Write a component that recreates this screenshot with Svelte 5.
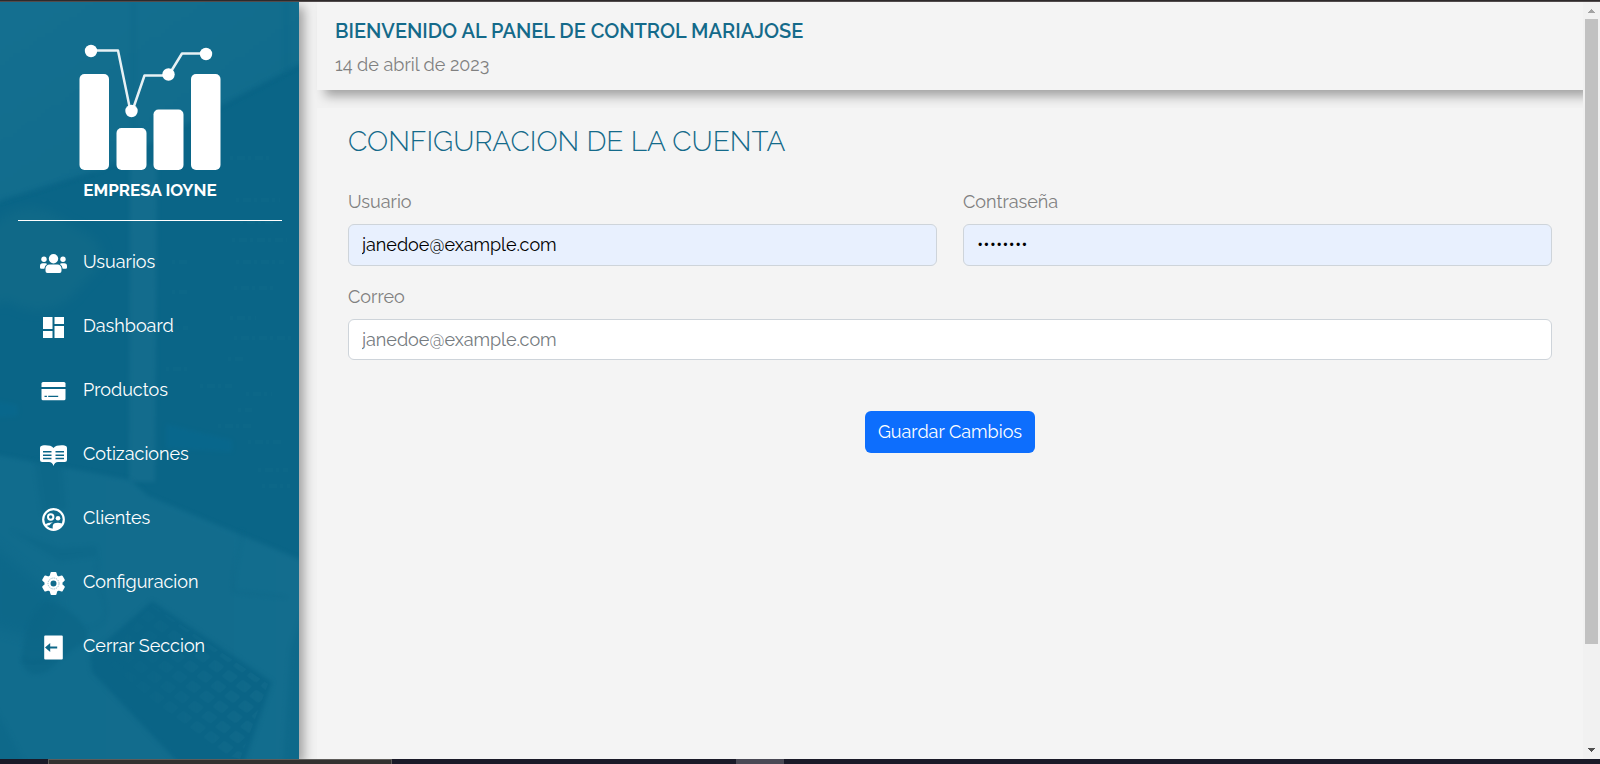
<script>
  const menu = [
    { label: 'Usuarios', icon: 'users' },
    { label: 'Dashboard', icon: 'dashboard' },
    { label: 'Productos', icon: 'card' },
    { label: 'Cotizaciones', icon: 'book' },
    { label: 'Clientes', icon: 'clients' },
    { label: 'Configuracion', icon: 'gear' },
    { label: 'Cerrar Seccion', icon: 'exit' }
  ];
  const codeLines = [
    [172, 262, 18], [232, 240, 55], [236, 262, 48], [172, 292, 16], [234, 288, 40],
    [230, 318, 26], [176, 328, 12], [234, 338, 60], [228, 359, 18], [166, 369, 22],
    [200, 386, 32], [246, 394, 26], [238, 410, 14], [218, 426, 36], [248, 442, 34],
    [258, 470, 30], [262, 486, 28], [230, 158, 40], [236, 200, 44], [240, 222, 36]
  ];
</script>

<div class="screen">
  <div class="edge-top"></div>
  <div class="view">
    <aside class="sidebar">
      <svg class="backdrop" viewBox="0 2 299 757" preserveAspectRatio="none" aria-hidden="true">
        <defs>
          <linearGradient id="wall" x1="0" y1="0" x2="1" y2="1">
            <stop offset="0" stop-color="#157091" />
            <stop offset="1" stop-color="#0f6a8a" />
          </linearGradient>
          <linearGradient id="desk" x1="0" y1="0" x2="1" y2="0">
            <stop offset="0" stop-color="#116c8d" />
            <stop offset="1" stop-color="#136d8e" />
          </linearGradient>
          <pattern id="keys" width="17" height="15" patternUnits="userSpaceOnUse" patternTransform="rotate(36) skewX(-12)">
            <rect x="2" y="2" width="12" height="10" rx="2" fill="#146d8d" />
          </pattern>
          <linearGradient id="keyFade" x1="0" y1="0" x2="1" y2="0">
            <stop offset="0.2" stop-color="#fff" stop-opacity="0.1" />
            <stop offset="0.9" stop-color="#fff" stop-opacity="0.8" />
          </linearGradient>
          <mask id="keyMask"><rect x="80" y="590" width="200" height="170" fill="url(#keyFade)" /></mask>
          <filter id="soft" x="-20%" y="-20%" width="140%" height="140%" color-interpolation-filters="sRGB"><feGaussianBlur stdDeviation="2" /></filter>
          <filter id="haze" x="-30%" y="-30%" width="160%" height="160%" color-interpolation-filters="sRGB"><feGaussianBlur stdDeviation="6" /></filter>
        </defs>
        <rect y="2" width="299" height="757" fill="#0a6587" />
        <path d="M-20 -20H320V54L190 122 100 170 -20 208Z" fill="url(#wall)" filter="url(#soft)" />
        <path d="M132 2h3v150h-3zM284 2h4v70h-4z" fill="#0c6789" opacity=".5" filter="url(#soft)" />
        <path d="M299 66 220 108M0 201 96 172" stroke="#096184" stroke-width="3" opacity=".4" filter="url(#soft)" />
        <path d="M-20 240C10 200 40 200 70 225 110 240 110 262 82 284 66 312 30 318 8 300L-20 310Z" fill="#186f8a" opacity=".45" filter="url(#haze)" />
        <path d="M130 165H157L155 482H129Z" fill="#1b7292" opacity=".55" filter="url(#soft)" />
        <path d="M166 424 232 440 232 452 166 448ZM-9 400 18 405V416L-9 418Z" fill="#076b94" opacity=".4" filter="url(#soft)" />
        {#each codeLines as [x, y, w]}
          <path d="M{x} {y}h{w}" stroke="#1a7693" stroke-width="4" stroke-dasharray="3 4 8 3" opacity=".16" />
        {/each}
        <path d="M-20 452 130 480 148 496 320 568V790H-20Z" fill="url(#desk)" filter="url(#soft)" />
        <path d="M34 460h28l4 48-24 6Z M10 530 60 548 96 546 98 556 60 561Z" fill="#0b6687" opacity=".5" filter="url(#soft)" />
        <path d="M-12 540 60 600 40 640 -12 625Z" fill="#0b6688" opacity=".6" filter="url(#haze)" />
        <path d="M242 530C240 550 232 575 234 592L286 597M98 560C92 590 112 600 104 620Q98 628 84 628" fill="none" stroke="#0b6586" stroke-width="2" opacity=".45" filter="url(#soft)" />
        <path d="M46 602C66 602 98 632 84 643 70 650 66 655 48 671 30 680 18 670 23 648 28 620 36 608 46 602Z" fill="#0b6586" opacity=".65" filter="url(#soft)" />
        <path d="M22 660Q38 668 62 652" fill="none" stroke="#075e80" stroke-width="3" opacity=".4" filter="url(#soft)" />
        <path d="M152 601 272 682 240 775H190L92 672 90 655Z" fill="#0a6486" filter="url(#soft)" />
        <path d="M152 605 268 684 240 759 215 752 104 660Z" fill="url(#keys)" mask="url(#keyMask)" opacity=".7" />
        <path d="M320 560V790L282 780 290 650Z" fill="#0b6687" opacity=".5" filter="url(#soft)" />
        <path d="M-20 680 34 780H-20Z" fill="#0c6788" opacity=".5" filter="url(#soft)" />
      </svg>

      <div class="brand">
        <svg class="logo" viewBox="79 44 141 127" aria-hidden="true">
          <g fill="#fff">
            <rect x="79" y="74" width="29.500" height="96" rx="5" />
            <rect x="116" y="128" width="30" height="42" rx="5" />
            <rect x="153" y="109.500" width="30" height="60.500" rx="5" />
            <rect x="190.500" y="74" width="29.500" height="96" rx="5" />
            <circle cx="90.500" cy="51" r="6.200" />
            <circle cx="131" cy="111" r="6.200" />
            <circle cx="168" cy="74.500" r="6.200" />
            <circle cx="205.500" cy="54" r="6.200" />
          </g>
          <path d="M90 50.500H117.500L129.500 109M132.500 109 144 75.500H168L181.500 53.500H205" fill="none" stroke="#fff" stroke-opacity=".9" stroke-width="2.500" stroke-linejoin="round" />
        </svg>
        <strong class="company">EMPRESA IOYNE</strong>
      </div>

      <nav>
        {#each menu as item}
          <a href="#{item.icon}">
            <svg viewBox="0 0 27 27" fill="#fff" aria-hidden="true">
              {#if item.icon === 'users'}
                <circle cx="13.500" cy="8.700" r="4.700" />
                <circle cx="4" cy="9.200" r="2.700" />
                <circle cx="23" cy="9.200" r="2.700" />
                <path d="M9.500 14.500h8c2.300 0 4 2 4 4.200v2.400q0 1.900-1.900 1.900H7.400q-1.900 0-1.900-1.900v-2.400c0-2.200 1.700-4.200 4-4.200ZM2.700 13.300h2.600q1 0 1.800.6-2.400 1.500-2.800 4.900H1.300Q0 18.800 0 17.500V16q0-2.700 2.700-2.700ZM21.700 13.300h2.600Q27 13.300 27 16v1.500q0 1.300-1.300 1.300h-3q-.4-3.400-2.800-4.900.8-.6 1.800-.6Z" />
              {:else if item.icon === 'dashboard'}
                <path d="M3 3h9.500v12H3zM14.500 3H24v7h-9.500zM14.500 12H24v12h-9.500zM3 17h9.500v7H3z" />
              {:else if item.icon === 'card'}
                <path d="M3 4h21q1.500 0 1.500 1.500V9h-24V5.500Q1.500 4 3 4Z" />
                <path fill-rule="evenodd" d="M1.500 11h24v9.700q0 1.500-1.500 1.500H3q-1.500 0-1.500-1.500ZM4.500 17.700v1.300h2.400v-1.300ZM8.200 17.700v1.300h10v-1.300Z" />
              {:else if item.icon === 'book'}
                <path fill-rule="evenodd" d="M2.500 3.500C7 3 11.800 3.600 13.500 6 15.200 3.600 20 3 24.500 3.500Q27 3.700 27 5.800V18q0 2-2.200 2H18q-3.400 0-4.500 4-1.100-4-4.500-4H2.200Q0 20 0 18V5.800Q0 3.700 2.500 3.500ZM3 9v1.500h8.500V9ZM3 12.400v1.500h8.500v-1.500ZM3 15.800v1.500h8.500v-1.500ZM15.500 9v1.500H24V9ZM15.500 12.400v1.500H24v-1.500ZM15.500 15.800v1.500H24v-1.500Z" />
              {:else if item.icon === 'clients'}
                <circle cx="13.500" cy="13.500" r="10.300" fill="none" stroke="#fff" stroke-width="2.200" />
                <circle cx="10.700" cy="11" r="2.700" fill="none" stroke="#fff" stroke-width="2" />
                <circle cx="18" cy="12.200" r="2.300" />
                <path d="M5 18.500q3.500-2.600 8-1.900-2.200.8-3.500 2.600-2 .1-3 1ZM12.700 23.500v-3.300q0-3.400 5.300-3.400 3.600 0 5 1.500-2 5.300-10.300 5.200Z" />
              {:else if item.icon === 'gear'}
                <path fill-rule="evenodd" stroke="#fff" stroke-width="2" stroke-linejoin="round" d="M11.500 3h4l.8 3.200 2.300 1.300 3.200-1 2 3.500-2.300 2.300v2.400l2.300 2.300-2 3.500-3.200-1-2.300 1.300-.8 3.200h-4l-.8-3.200-2.300-1.300-3.200 1-2-3.500 2.300-2.300v-2.400L3.200 10l2-3.500 3.200 1 2.300-1.300ZM13.500 9.500a4 4 0 1 0 0 8 4 4 0 1 0 0-8Z" />
                <circle cx="13.500" cy="13.500" r="5.500" fill="none" stroke="#0f6a8b" stroke-width=".4" stroke-dasharray="1.500 .8" />
              {:else}
                <path fill-rule="evenodd" d="M5.200 1.500h16.600q1 0 1 1v22q0 1-1 1H5.200q-1 0-1-1v-22q0-1 1-1ZM5 13.500l5.200 4.600v-3.500h7v-2.200h-7V8.900Z" />
              {/if}
            </svg>
            <span>{item.label}</span>
          </a>
        {/each}
      </nav>
    </aside>

    <main>
      <header>
        <h1>BIENVENIDO AL PANEL DE CONTROL MARIAJOSE</h1>
        <p>14 de abril de 2023</p>
      </header>

      <section>
        <h2>CONFIGURACION DE LA CUENTA</h2>
        <form onsubmit={(e) => e.preventDefault()}>
          <div class="field">
            <label for="usuario">Usuario</label>
            <input class="filled" id="usuario" type="text" value="janedoe@example.com" />
          </div>
          <div class="field">
            <label for="clave">Contraseña</label>
            <input class="filled" id="clave" type="password" value="contrase" />
          </div>
          <div class="field wide">
            <label for="correo">Correo</label>
            <input id="correo" type="email" placeholder="janedoe@example.com" />
          </div>
          <button type="submit">Guardar Cambios</button>
        </form>
      </section>
    </main>

    <div class="scrollbar" aria-hidden="true">
      <svg viewBox="0 0 17 17"><path d="M5 11h7v-1h-1V9h-1V8H9V7H8v1H7v1H6v1H5Z" fill="#a3a3a3" /></svg>
      <div class="track"><div class="thumb"></div></div>
      <svg viewBox="0 0 17 17"><path d="M5 6h7v1h-1v1h-1v1H9v1H8V9H7V8H6V7H5Z" fill="#505050" /></svg>
    </div>
  </div>
  <div class="taskbar"><span class="window"></span><span class="active"></span></div>
</div>

<style>
  :global(body) {
    margin: 0;
    background: #f1f1f1;
  }
  .screen,
  .screen * {
    box-sizing: border-box;
  }
  .screen {
    display: grid;
    grid-template-rows: 2px 1fr 5px;
    min-height: 100vh;
    font: 400 18px/27px Raleway, Lato, sans-serif;
    color: #808080;
  }
  .edge-top {
    background: #2e2a2b;
    border-bottom: 1px solid #514b4c;
  }
  .view {
    display: grid;
    grid-template-columns: 299px 1fr 17px;
    overflow: hidden;
  }
  .sidebar {
    position: relative;
    z-index: 1;
    padding: 42px 17px 0 18px;
    background: #0a6587;
    box-shadow: 5px 5px 10px rgba(0, 0, 0, 0.33);
    color: #fff;
  }
  .backdrop {
    position: absolute;
    inset: 0;
    width: 100%;
    height: 100%;
  }
  .brand {
    position: relative;
    display: flex;
    flex-direction: column;
    align-items: center;
    padding-bottom: 16px;
    border-bottom: 1px solid #fff;
  }
  .logo {
    width: 142px;
    height: 127px;
  }
  .company {
    margin-top: 6px;
    font-size: 17px;
    font-weight: 700;
  }
  nav {
    position: relative;
    display: flex;
    flex-direction: column;
    padding: 10px 22px;
  }
  nav a {
    display: flex;
    align-items: center;
    gap: 16px;
    height: 64px;
    color: #fff;
    text-decoration: none;
  }
  nav svg {
    width: 27px;
    height: 27px;
  }
  nav span {
    padding-bottom: 4px;
  }
  main {
    display: flex;
    flex-direction: column;
    gap: 18px;
    padding-left: 18px;
    overflow: hidden;
  }
  header {
    padding: 17px 18px;
    height: 88px;
    background: #f4f4f4;
    box-shadow: 8px 6px 10px rgba(0, 0, 0, 0.33);
  }
  h1 {
    margin: 0 0 8px;
    font-size: 20px;
    line-height: 24px;
    font-weight: 600;
    color: #146a8a;
  }
  p {
    margin: 0;
  }
  section {
    flex: 1;
    padding: 17px 31px;
    background: #f4f4f4;
  }
  h2 {
    margin: 0 0 29px;
    font-size: 28px;
    line-height: 34px;
    font-weight: 300;
    color: #146a8a;
  }
  form {
    display: grid;
    grid-template-columns: 1fr 1fr;
    gap: 17px 26px;
  }
  .field {
    display: flex;
    flex-direction: column;
    gap: 9px;
  }
  .wide {
    grid-column: 1 / -1;
  }
  input {
    width: 100%;
    height: 41px;
    padding: 5px 13px 6px;
    border: 1px solid #ced4da;
    border-radius: 6px;
    background: #fff;
    font: inherit;
    color: #000;
  }
  input::placeholder {
    color: #757b80;
    opacity: 1;
  }
  .filled {
    height: 42px;
    background: #e8f0fe;
  }
  button {
    grid-column: 1 / -1;
    justify-self: center;
    height: 42px;
    margin-top: 34px;
    padding: 0 13px 2px;
    border: 0;
    border-radius: 6px;
    background: #0d6efd;
    font: inherit;
    color: #fff;
  }
  .scrollbar {
    display: flex;
    flex-direction: column;
    background: #f1f1f1;
  }
  .scrollbar svg {
    width: 17px;
    height: 17px;
  }
  .track {
    flex: 1;
    padding: 0 2px;
  }
  .thumb {
    height: 86.500%;
    background: #c1c1c1;
  }
  .taskbar {
    display: grid;
    grid-template-columns: 6fr 43fr 43fr 6fr 102fr;
    background: #1a1a28;
  }
  .window {
    grid-column: 2;
    border: 1px solid #5e5c5a;
    border-bottom: 0;
    background: #333231;
  }
  .active {
    grid-column: 4;
    background: #4a4955;
  }
</style>
